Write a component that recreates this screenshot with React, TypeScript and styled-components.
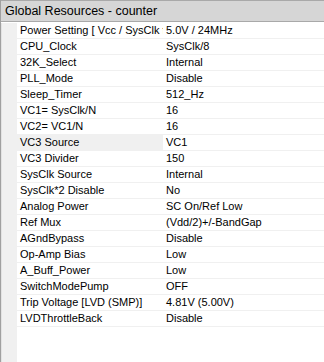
import styled, { createGlobalStyle } from 'styled-components';

const GlobalStyle = createGlobalStyle`
  html, body {
    margin: 0;
    padding: 0;
    background: #ffffff;
  }
  body {
    font-family: 'Liberation Sans', Arial, sans-serif;
  }
`;

const Panel = styled.div`
  width: 324px;
  height: 362px;
  box-sizing: border-box;
  border-left: 1px solid #a0a0a0;
  background: #ffffff;
  overflow: hidden;
  display: flex;
  flex-direction: column;
`;

const Header = styled.div`
  height: 22px;
  box-sizing: border-box;
  border-top: 1px solid #a9a9a9;
  border-bottom: 1px solid #a9a9a9;
  background: #d6d6d6;
  color: #000;
  font-size: 12.5px;
  line-height: 20px;
  padding-left: 4px;
  white-space: nowrap;
`;

const Body = styled.div`
  flex: 1;
  display: grid;
  grid-template-columns: 16px 1fr;
  padding-top: 1px;
`;

const Gutter = styled.div`
  background: #f0f0f0;
  border-left: 1px solid #e2e2e2;
`;

const List = styled.div`
  display: flex;
  flex-direction: column;
`;

const Row = styled.div`
  display: grid;
  grid-template-columns: 146px 1fr;
  height: 16px;
  box-sizing: border-box;
  border-bottom: 1px solid #f0f0f0;
  font-size: 11px;
  line-height: 15px;
  color: #000;
`;

const NameCell = styled.div<{ $selected?: boolean }>`
  padding-left: 3px;
  white-space: nowrap;
  overflow: hidden;
  background: ${(p) => (p.$selected ? '#f0f0f0' : 'transparent')};
`;

const ValueCell = styled.div`
  padding-left: 3px;
  white-space: nowrap;
  overflow: hidden;
`;

const props: [string, string][] = [
  ['Power Setting [ Vcc / SysClk freq ]', '5.0V / 24MHz'],
  ['CPU_Clock', 'SysClk/8'],
  ['32K_Select', 'Internal'],
  ['PLL_Mode', 'Disable'],
  ['Sleep_Timer', '512_Hz'],
  ['VC1= SysClk/N', '16'],
  ['VC2= VC1/N', '16'],
  ['VC3 Source', 'VC1'],
  ['VC3 Divider', '150'],
  ['SysClk Source', 'Internal'],
  ['SysClk*2 Disable', 'No'],
  ['Analog Power', 'SC On/Ref Low'],
  ['Ref Mux', '(Vdd/2)+/-BandGap'],
  ['AGndBypass', 'Disable'],
  ['Op-Amp Bias', 'Low'],
  ['A_Buff_Power', 'Low'],
  ['SwitchModePump', 'OFF'],
  ['Trip Voltage [LVD (SMP)]', '4.81V (5.00V)'],
  ['LVDThrottleBack', 'Disable'],
];

function App() {
  return (
    <>
      <GlobalStyle />
      <Panel>
        <Header>Global Resources - counter</Header>
        <Body>
          <Gutter />
          <List>
            {props.map(([name, value]) => (
              <Row key={name}>
                <NameCell $selected={name === 'VC3 Source'}>{name}</NameCell>
                <ValueCell>{value}</ValueCell>
              </Row>
            ))}
          </List>
        </Body>
      </Panel>
    </>
  );
}

export default App;
